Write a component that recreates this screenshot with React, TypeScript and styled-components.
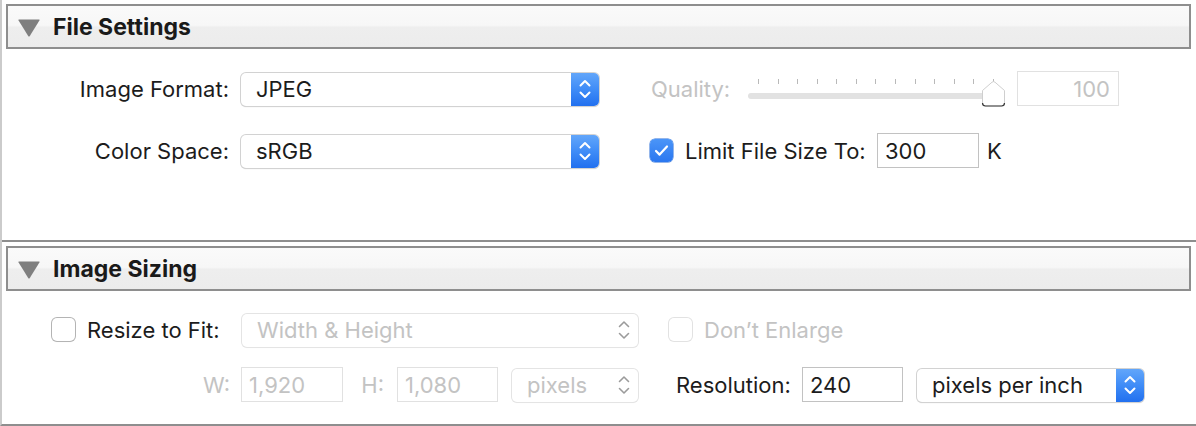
import React from "react";
import styled, { createGlobalStyle } from "styled-components";

const GlobalStyle = createGlobalStyle`
  html, body {
    margin: 0;
    padding: 0;
    background: #fff;
  }
  body {
    font-family: Inter, "Liberation Sans", Arial, sans-serif;
    -webkit-font-smoothing: antialiased;
  }
`;

const Panel = styled.div`
  width: 1196px;
  height: 426px;
  box-sizing: border-box;
  border-left: 2px solid #cbcbcb;
  border-bottom: 2px solid #8e8e8e;
  display: flex;
  flex-direction: column;
  overflow: hidden;
`;

const Section = styled.section<{ $divider?: boolean; $height: number }>`
  height: ${(p) => p.$height}px;
  box-sizing: border-box;
  padding-top: 4px;
  border-top: ${(p) => (p.$divider ? "2px solid #8e8e8e" : "none")};
  display: flex;
  flex-direction: column;
`;

const Header = styled.div`
  height: 45px;
  margin: 0 5px 0 4px;
  box-sizing: border-box;
  border: 2px solid #8e8e8e;
  background: linear-gradient(#fafafa 0%, #f7f7f7 47%, #eeeeee 52%, #ececec 100%);
  display: flex;
  align-items: center;
  flex-shrink: 0;
`;

const Disclosure = styled.svg`
  width: 22px;
  height: 18px;
  margin-left: 10px;
  margin-top: 2px;
`;

const HeaderTitle = styled.span`
  margin-left: 13px;
  font-size: 23px;
  font-weight: 700;
  color: #1a1a1a;
`;

const Row = styled.div<{ $top: number }>`
  display: flex;
  align-items: center;
  height: 35px;
  margin-top: ${(p) => p.$top}px;
`;

const Label = styled.span<{ $w?: number; $ml?: number; $right?: boolean; $disabled?: boolean }>`
  flex-shrink: 0;
  width: ${(p) => (p.$w ? `${p.$w}px` : "auto")};
  margin-left: ${(p) => p.$ml ?? 0}px;
  text-align: ${(p) => (p.$right ? "right" : "left")};
  font-size: 22px;
  color: ${(p) => (p.$disabled ? "#c3c3c3" : "#1c1c1c")};
  white-space: nowrap;
`;

const PopupBox = styled.div<{ $w: number; $ml?: number; $disabled?: boolean }>`
  flex-shrink: 0;
  width: ${(p) => p.$w}px;
  height: 33px;
  margin-left: ${(p) => p.$ml ?? 0}px;
  margin-top: 1px;
  box-sizing: border-box;
  border-radius: 5px;
  background: #fff;
  box-shadow: ${(p) =>
    p.$disabled
      ? "0 0 0 1px #e4e4e4, 0 1px 1px rgba(0,0,0,0.05)"
      : "0 0 0 1px #d2d2d2, 0 1px 1px rgba(0,0,0,0.22)"};
  display: flex;
  align-items: center;
  overflow: hidden;
`;

const PopupText = styled.span<{ $disabled?: boolean }>`
  flex: 1;
  padding-left: 15px;
  font-size: 22px;
  color: ${(p) => (p.$disabled ? "#c3c3c3" : "#1c1c1c")};
  white-space: nowrap;
`;

const Stepper = styled.div<{ $disabled?: boolean }>`
  width: 28px;
  height: 100%;
  display: flex;
  align-items: center;
  justify-content: center;
  background: ${(p) =>
    p.$disabled ? "transparent" : "linear-gradient(#62a6fa 0%, #3f8cf7 50%, #2270ef 100%)"};
  color: ${(p) => (p.$disabled ? "#9b9b9b" : "#fff")};
`;

const TextField = styled.div<{ $w: number; $ml?: number; $disabled?: boolean; $right?: boolean }>`
  flex-shrink: 0;
  width: ${(p) => p.$w}px;
  height: 35px;
  margin-left: ${(p) => p.$ml ?? 0}px;
  box-sizing: border-box;
  border: 1px solid ${(p) => (p.$disabled ? "#e1e1e1" : "#c2c2c2")};
  padding: 0 8px 0 7px;
  display: flex;
  align-items: center;
  justify-content: ${(p) => (p.$right ? "flex-end" : "flex-start")};
  font-size: 22px;
  color: ${(p) => (p.$disabled ? "#c3c3c3" : "#1c1c1c")};
`;

const CheckBox = styled.div<{ $checked?: boolean; $disabled?: boolean; $ml?: number }>`
  flex-shrink: 0;
  width: 23px;
  height: 23px;
  margin-left: ${(p) => p.$ml ?? 0}px;
  box-sizing: border-box;
  border-radius: 5px;
  background: ${(p) => (p.$checked ? "linear-gradient(#4b95f8, #2a77f0)" : "#fff")};
  box-shadow: ${(p) =>
    p.$checked
      ? "0 0 0 0.5px #2a6fd8"
      : p.$disabled
      ? "0 0 0 1px #e2e2e2"
      : "0 0 0 1px #b4b4b4, 0 1px 1px rgba(0,0,0,0.1)"};
  display: flex;
  align-items: center;
  justify-content: center;
`;

const SliderBox = styled.div`
  position: relative;
  flex-shrink: 0;
  width: 257px;
  height: 35px;
  box-sizing: border-box;
  padding-top: 8px;
  display: flex;
  flex-direction: column;
`;

const Ticks = styled.div`
  display: flex;
  justify-content: space-between;
  margin: 0 11px 0 10px;
  height: 5px;
`;

const Tick = styled.span`
  width: 1px;
  height: 5px;
  background: #b9b9b9;
`;

const Track = styled.div`
  margin-top: 9px;
  width: 248px;
  height: 6px;
  border-radius: 3px;
  background: #e2e2e2;
`;

const Thumb = styled.svg`
  position: absolute;
  left: 233px;
  top: 10px;
  width: 25px;
  height: 26px;
`;

const Chevrons = ({ disabled }: { disabled?: boolean }) => (
  <svg width="12" height="20" viewBox="0 0 12 20">
    <path
      d="M1.5 6.5 L6 2 L10.5 6.5 M1.5 13.5 L6 18 L10.5 13.5"
      fill="none"
      stroke="currentColor"
      strokeWidth={disabled ? 1.6 : 2}
      strokeLinecap="round"
      strokeLinejoin="round"
    />
  </svg>
);

const Popup = ({
  value,
  width,
  ml,
  disabled,
}: {
  value: string;
  width: number;
  ml?: number;
  disabled?: boolean;
}) => (
  <PopupBox $w={width} $ml={ml} $disabled={disabled}>
    <PopupText $disabled={disabled}>{value}</PopupText>
    <Stepper $disabled={disabled}>
      <Chevrons disabled={disabled} />
    </Stepper>
  </PopupBox>
);

const Check = ({ checked, disabled, ml }: { checked?: boolean; disabled?: boolean; ml?: number }) => (
  <CheckBox $checked={checked} $disabled={disabled} $ml={ml}>
    {checked && (
      <svg width="15" height="13" viewBox="0 0 15 13">
        <path
          d="M2 7 L5.6 10.6 L13 2.5"
          fill="none"
          stroke="#fff"
          strokeWidth="2.2"
          strokeLinecap="round"
          strokeLinejoin="round"
        />
      </svg>
    )}
  </CheckBox>
);

const QualitySlider = () => (
  <SliderBox>
    <Ticks>
      {Array.from({ length: 13 }).map((_, i) => (
        <Tick key={i} />
      ))}
    </Ticks>
    <Track />
    <Thumb viewBox="0 0 25 26">
      <path
        d="M11 1.2 Q12.5 0 14 1.2 L23.5 9.5 V22 Q23.5 25 20.5 25 H4.5 Q1.5 25 1.5 22 V9.5 Z"
        fill="#fff"
        stroke="#cfcfcf"
        strokeWidth="1"
      />
      <path d="M1.5 22 Q1.5 25 4.5 25 H20.5 Q23.5 25 23.5 22" fill="none" stroke="#3a3a3a" strokeWidth="1.2" />
    </Thumb>
  </SliderBox>
);

const SectionHeader = ({ title }: { title: string }) => (
  <Header>
    <Disclosure viewBox="0 0 22 18">
      <path d="M1 0.5 H21 Q22 0.5 21.4 1.5 L11.8 17 Q11 18 10.2 17 L0.6 1.5 Q0 0.5 1 0.5 Z" fill="#7f7f7f" />
    </Disclosure>
    <HeaderTitle>{title}</HeaderTitle>
  </Header>
);

export default function App() {
  return (
    <>
      <GlobalStyle />
      <Panel>
        <Section $height={240}>
          <SectionHeader title="File Settings" />
          <Row $top={22}>
            <Label $w={227} $right>
              Image Format:
            </Label>
            <Popup value="JPEG" width={358} ml={12} />
            <Label $w={97} $ml={52} $disabled>
              Quality:
            </Label>
            <QualitySlider />
            <TextField $w={102} $ml={12} $disabled $right>
              100
            </TextField>
          </Row>
          <Row $top={27}>
            <Label $w={227} $right>
              Color Space:
            </Label>
            <Popup value="sRGB" width={358} ml={12} />
            <Check checked ml={51} />
            <Label $w={180} $ml={12}>
              Limit File Size To:
            </Label>
            <TextField $w={102} $ml={12}>
              300
            </TextField>
            <Label $ml={8}>K</Label>
          </Row>
        </Section>
        <Section $height={184} $divider>
          <SectionHeader title="Image Sizing" />
          <Row $top={21}>
            <Check ml={50} />
            <Label $w={155} $ml={12}>
              Resize to Fit:
            </Label>
            <Popup value="Width &amp; Height" width={396} disabled />
            <Check disabled ml={31} />
            <Label $ml={12} $disabled>
              Don’t Enlarge
            </Label>
          </Row>
          <Row $top={20}>
            <Label $w={228} $right $disabled>
              W:
            </Label>
            <TextField $w={102} $ml={11} $disabled>
              1,920
            </TextField>
            <Label $w={41} $right $disabled>
              H:
            </Label>
            <TextField $w={101} $ml={13} $disabled>
              1,080
            </TextField>
            <Popup value="pixels" width={126} ml={14} disabled />
            <Label $w={126} $ml={38}>
              Resolution:
            </Label>
            <TextField $w={101}>240</TextField>
            <Popup value="pixels per inch" width={227} ml={14} />
          </Row>
        </Section>
      </Panel>
    </>
  );
}
